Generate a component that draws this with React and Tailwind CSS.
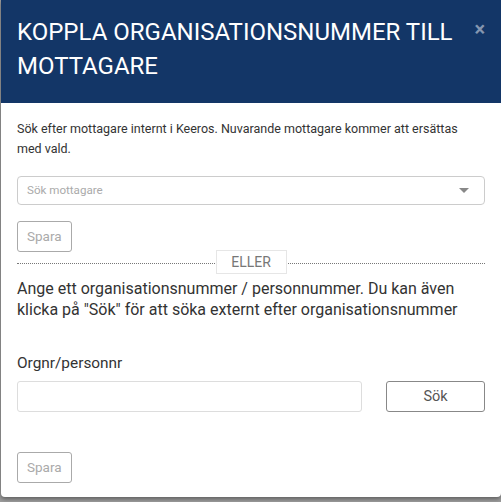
export default function App() {
  return (
    <div className="min-h-screen bg-[#9c9c9c] font-['Roboto',sans-serif]" style={{ height: 502 }}>
      <div className="ml-px h-[497px] w-[500px] overflow-hidden rounded-b-[4px] bg-white shadow-[0_2px_4px_rgba(0,0,0,0.4)]">
        <div className="relative bg-[#133667] pl-4 pr-10 pt-[15px] pb-[20px]">
          <h1 className="text-[24px] leading-[34px] font-normal uppercase text-white">
            Koppla organisationsnummer till mottagare
          </h1>
          <button className="absolute right-[16px] top-[19px] text-[20px] font-bold leading-none text-[#8596b0]">
            ×
          </button>
        </div>

        <div className="px-4 pt-[16px]">
          <p className="max-w-[462px] text-[12.5px] leading-[20px] text-[#333]">
            Sök efter mottagare internt i Keeros. Nuvarande mottagare kommer att ersättas med vald.
          </p>

          <div className="mt-[17px] flex h-[29px] w-[468px] items-center justify-between rounded-[4px] border border-[#ccc] pl-[9px] pr-[15px]">
            <span className="text-[11.6px] text-[#aaa]">Sök mottagare</span>
            <span className="h-0 w-0 border-x-[5px] border-t-[5px] border-x-transparent border-t-[#888]" />
          </div>

          <button className="mt-[16px] h-[31px] rounded-[3px] border border-[#aaa] px-[9px] text-[13.5px] text-[#aaa]">
            Spara
          </button>

          <div className="relative -mt-[2px] flex h-[24px] w-[468px] items-center justify-center">
            <div className="absolute left-0 right-0 top-[13px] border-t border-dotted border-[#777]" />
            <span className="relative z-10 flex h-[24px] w-[71px] items-center justify-center border border-[#e6e6e6] bg-white text-[14px] text-[#777]">
              ELLER
            </span>
          </div>

          <p className="mt-[4px] text-[16px] leading-[21px] text-[#333]">
            Ange ett organisationsnummer / personnummer. Du kan även klicka på "Sök" för att söka externt efter organisationsnummer
          </p>

          <label className="mt-[33px] block text-[15.4px] leading-[21px] text-[#333]">Orgnr/personnr</label>

          <div className="mt-[7px] flex w-[468px] items-center justify-between">
            <input className="h-[31px] w-[345px] rounded-[3px] border border-[#ddd] outline-none" />
            <button className="h-[31px] w-[99px] rounded-[3px] border border-[#888] text-[14.5px] text-[#555]">
              Sök
            </button>
          </div>

          <button className="mt-[40px] h-[31px] rounded-[3px] border border-[#aaa] px-[9px] text-[13.5px] text-[#aaa]">
            Spara
          </button>
        </div>
      </div>
    </div>
  );
}
